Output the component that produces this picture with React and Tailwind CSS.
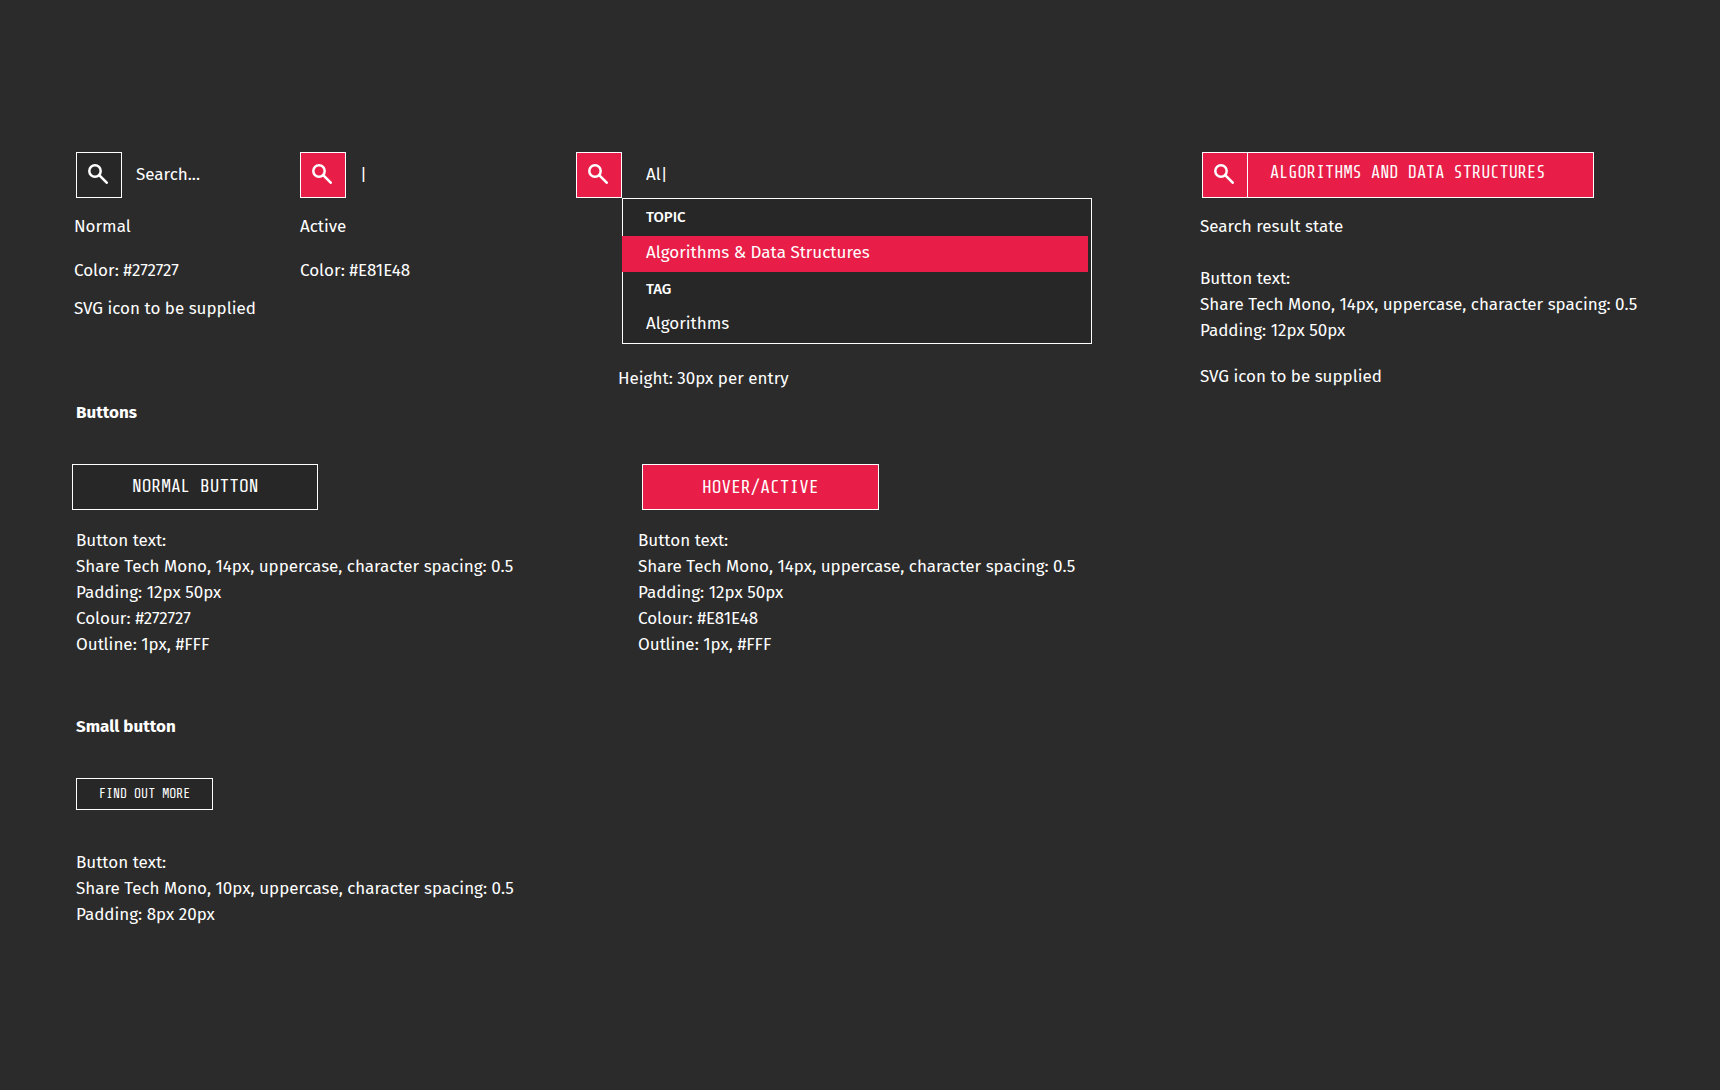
function SearchButton({ active = false, label }) {
  return (
    <button
      type="button"
      aria-label={label}
      className={`flex size-[46px] shrink-0 items-center justify-center border border-white pb-0.5 pr-0.5 ${
        active ? 'bg-[#e81e48]' : 'bg-[#272727]'
      }`}
    >
      <svg width="20" height="20" viewBox="0 0 20 20" fill="none" stroke="#fff" aria-hidden="true">
        <circle cx="7" cy="7" r="5.7" strokeWidth="2.5" />
        <path d="M11.2 11.2 18.7 18.7" strokeWidth="2.6" strokeLinecap="round" />
      </svg>
    </button>
  );
}

function SearchField({ active, label, value, placeholder, pad }) {
  return (
    <div className="flex">
      <SearchButton active={active} label={label} />
      <input
        type="text"
        aria-label={label}
        defaultValue={value}
        placeholder={placeholder}
        className={`w-full min-w-0 bg-transparent text-white outline-none placeholder:text-white placeholder:opacity-100 ${pad}`}
      />
    </div>
  );
}

function Notes({ lines, className }) {
  return (
    <div className={className}>
      {lines.map((line) => (
        <p key={line}>{line}</p>
      ))}
    </div>
  );
}

const buttonFont = 'border border-white font-["Share_Tech_Mono","Liberation_Mono",monospace] uppercase';
const bigSpec = ['Button text:', 'Share Tech Mono, 14px, uppercase, character spacing: 0.5', 'Padding: 12px 50px'];

export default function App() {
  return (
    <main className={`min-h-screen bg-[#2b2b2b] px-[74px] pb-20 pt-[152px] font-["Fira_Sans","Noto_Sans",sans-serif] text-[17px]/[26px] text-white`}>
      <section className="grid grid-cols-[226fr_276fr_624fr_446fr]">
        <div className="min-w-0">
          <div className="ml-0.5">
            <SearchField label="Search" placeholder="Search..." pad="pl-3.5" />
          </div>
          <p className="mt-4">Normal</p>
          <p className="mt-[18px]">Color: #272727</p>
          <p className="mt-3">SVG icon to be supplied</p>
        </div>

        <div className="min-w-0">
          <SearchField active label="Active search" value="|" pad="pl-3.5" />
          <p className="mt-4">Active</p>
          <p className="mt-[18px]">Color: #E81E48</p>
        </div>

        <div className="min-w-0">
          <SearchField active label="Search with suggestions" value="Al|" pad="pl-6" />
          <div className="ml-[46px] mr-[108px] border border-white bg-[#272727]">
            <h3 className="pl-[23px] text-[15px]/[37px] font-medium">TOPIC</h3>
            <button type="button" className="-ml-px block w-[calc(100%-2px)] bg-[#e81e48] pb-0.5 pl-6 text-left leading-[34px]">
              Algorithms &amp; Data Structures
            </button>
            <h3 className="pl-[23px] text-[15px]/[35px] font-medium">TAG</h3>
            <button type="button" className="block w-full pb-0.5 pl-[23px] text-left leading-[34px]">
              Algorithms
            </button>
          </div>
          <p className="ml-[42px] mt-[22px]">Height: 30px per entry</p>
        </div>

        <div className="min-w-0">
          <div className="ml-0.5 mr-[52px] flex">
            <SearchButton active label="Search again" />
            <button type="button" className={`${buttonFont} -ml-px flex-1 whitespace-nowrap bg-[#e81e48] pb-1 pl-[22px] text-left text-[17px]`}>
              Algorithms and Data Structures
            </button>
          </div>
          <p className="mt-4">Search result state</p>
          <Notes className="mt-[26px]" lines={bigSpec} />
          <p className="mt-5">SVG icon to be supplied</p>
        </div>
      </section>

      <section className="mt-2 pl-0.5">
        <h2 className="font-bold">Buttons</h2>
        <div className="mt-[38px] grid grid-cols-[562fr_1008fr]">
          <div>
            <button type="button" className={`${buttonFont} -ml-1 block h-[46px] bg-[#272727] px-[59px] pb-0.5 text-lg`}>
              Normal button
            </button>
            <Notes className="mt-[18px]" lines={[...bigSpec, 'Colour: #272727', 'Outline: 1px, #FFF']} />
          </div>
          <div>
            <button type="button" className={`${buttonFont} ml-1 block h-[46px] bg-[#e81e48] px-[59px] text-lg`}>
              Hover/Active
            </button>
            <Notes className="mt-[18px]" lines={[...bigSpec, 'Colour: #E81E48', 'Outline: 1px, #FFF']} />
          </div>
        </div>
      </section>

      <section className="mt-14 pl-0.5">
        <h2 className="font-bold">Small button</h2>
        <button type="button" className={`${buttonFont} mt-[38px] block h-8 bg-[#272727] px-[22px] text-[13px]`}>
          Find out more
        </button>
        <Notes
          className="mt-10"
          lines={['Button text:', 'Share Tech Mono, 10px, uppercase, character spacing: 0.5', 'Padding: 8px 20px']}
        />
      </section>
    </main>
  );
}
